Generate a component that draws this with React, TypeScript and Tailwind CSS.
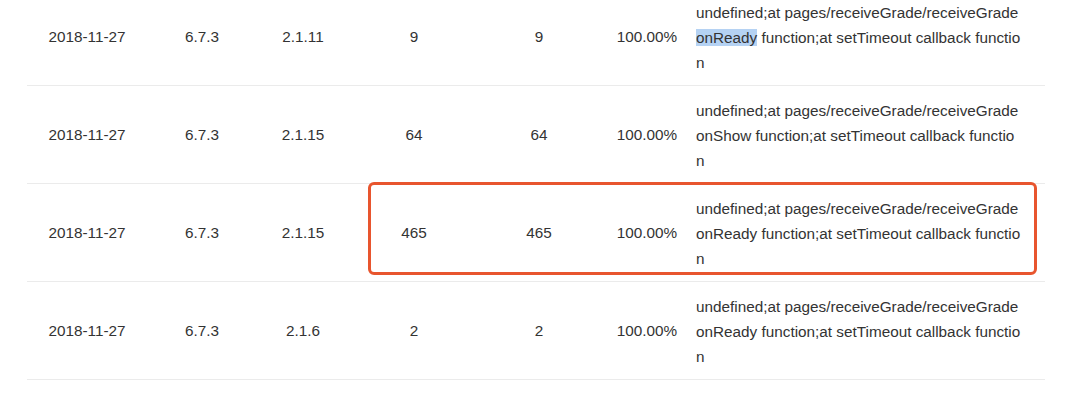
type Row = {
  date: string;
  wx: string;
  lib: string;
  count: number;
  users: number;
  rate: string;
  page: string;
  hook: string;
};

const rows: Row[] = [
  { date: "2018-11-27", wx: "6.7.3", lib: "2.1.11", count: 9, users: 9, rate: "100.00%", page: "pages/receiveGrade/receiveGrade", hook: "onReady" },
  { date: "2018-11-27", wx: "6.7.3", lib: "2.1.15", count: 64, users: 64, rate: "100.00%", page: "pages/receiveGrade/receiveGrade", hook: "onShow" },
  { date: "2018-11-27", wx: "6.7.3", lib: "2.1.15", count: 465, users: 465, rate: "100.00%", page: "pages/receiveGrade/receiveGrade", hook: "onReady" },
  { date: "2018-11-27", wx: "6.7.3", lib: "2.1.6", count: 2, users: 2, rate: "100.00%", page: "pages/receiveGrade/receiveGrade", hook: "onReady" },
];

function ErrorRow({ row, selected, marked }: { row: Row; selected?: boolean; marked?: boolean }) {
  return (
    <div className="relative flex h-[98px] items-center border-b border-[#ebebeb] pt-[2px]">
      <div className="w-[120px] text-center">{row.date}</div>
      <div className="w-[110px] text-center">{row.wx}</div>
      <div className="w-[92px] text-center">{row.lib}</div>
      <div className="w-[130px] text-center">{row.count}</div>
      <div className="w-[120px] text-center">{row.users}</div>
      <div className="w-[96px] text-center">{row.rate}</div>
      <div className="flex-1 pl-[1px]">
        <p className="w-[325px] break-all leading-[25px]">
          undefined;at {row.page}{" "}
          <span className={selected ? "bg-[#b5d2f3]" : ""}>{row.hook}</span> function;at setTimeout callback function
        </p>
      </div>
      {marked && (
        <div className="absolute left-[341px] top-[-2px] h-[93px] w-[669px] rounded-[6px] border-[3px] border-[#e8552e]" />
      )}
    </div>
  );
}

export default function App() {
  return (
    <div className="h-[393px] w-[1080px] overflow-hidden bg-white font-['Liberation_Sans',Arial,sans-serif] text-[15.3px] text-[#333]">
      <div className="ml-[27px] mt-[-12px] w-[1018px]">
        {rows.map((row, i) => (
          <ErrorRow key={i} row={row} selected={i === 0} marked={i === 2} />
        ))}
      </div>
    </div>
  );
}
